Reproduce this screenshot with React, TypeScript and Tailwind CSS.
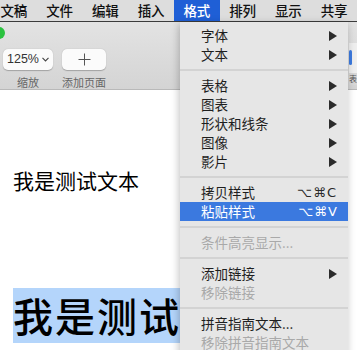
import React from "react";

type Item =
  | { kind: "sep" }
  | { kind: "item"; label: string; sub?: boolean; keys?: string; disabled?: boolean; active?: boolean };

const menuItems: Item[] = [
  { kind: "item", label: "字体", sub: true },
  { kind: "item", label: "文本", sub: true },
  { kind: "sep" },
  { kind: "item", label: "表格", sub: true },
  { kind: "item", label: "图表", sub: true },
  { kind: "item", label: "形状和线条", sub: true },
  { kind: "item", label: "图像", sub: true },
  { kind: "item", label: "影片", sub: true },
  { kind: "sep" },
  { kind: "item", label: "拷贝样式", keys: "⌥⌘C" },
  { kind: "item", label: "粘贴样式", keys: "⌥⌘V", active: true },
  { kind: "sep" },
  { kind: "item", label: "条件高亮显示...", disabled: true },
  { kind: "sep" },
  { kind: "item", label: "添加链接", sub: true },
  { kind: "item", label: "移除链接", disabled: true },
  { kind: "sep" },
  { kind: "item", label: "拼音指南文本..." },
  { kind: "item", label: "移除拼音指南文本", disabled: true },
];

const menuBar = ["文稿", "文件", "编辑", "插入", "格式", "排列", "显示", "共享"];

const Arrow = ({ light }: { light?: boolean }) => (
  <svg width="8" height="10" viewBox="0 0 8 10">
    <polygon points="0,0 8,5 0,10" fill={light ? "#ffffff" : "#2b2b2b"} />
  </svg>
);

export default function App() {
  return (
    <div className="relative w-[357px] h-[350px] overflow-hidden bg-white font-['Noto_Sans_CJK_SC',sans-serif]">
      {/* menu bar */}
      <div className="flex h-[22px] bg-[#dddddd] border-b border-[#3c3c3c] -ml-[9px]">
        {menuBar.map((m) => (
          <div
            key={m}
            className={
              m === "格式"
                ? "w-[47px] text-center text-[13.5px] leading-[21px] font-medium bg-[#1f5fd6] text-white"
                : "w-[47px] text-center text-[13.5px] leading-[21px] font-medium text-[#111]"
            }
          >
            {m}
          </div>
        ))}
      </div>

      {/* toolbar */}
      <div className="flex h-[68px] bg-gradient-to-b from-[#e3e3e3] to-[#d4d4d4] border-b border-[#b9b9b9]">
        <div className="flex-1 flex flex-col">
          <div className="h-[27px]">
            <div className="w-[12px] h-[12px] rounded-full bg-[#2bc23f] -ml-[7px] mt-[5px]" />
          </div>
          <div className="flex">
            <div className="ml-[3px] flex flex-col items-center">
              <div className="w-[50px] h-[21px] rounded-[5px] bg-[#fbfbfb] shadow-[0_0.5px_1px_rgba(0,0,0,0.25)] flex items-center justify-center gap-[3px] text-[12.5px] text-[#333] font-['Liberation_Sans',sans-serif]">
                125%
                <svg width="7" height="5" viewBox="0 0 7 5">
                  <polyline points="0.5,0.8 3.5,4 6.5,0.8" fill="none" stroke="#444" strokeWidth="1.1" />
                </svg>
              </div>
              <div className="mt-[5px] text-[11px] leading-[14px] text-[#666]">缩放</div>
            </div>
            <div className="ml-[9px] flex flex-col items-center">
              <div className="w-[44px] h-[21px] rounded-[5px] bg-[#fbfbfb] shadow-[0_0.5px_1px_rgba(0,0,0,0.25)] flex items-center justify-center">
                <svg width="13" height="13" viewBox="0 0 13 13">
                  <path d="M6.5 0.5V12.5M0.5 6.5H12.5" stroke="#555" strokeWidth="1" />
                </svg>
              </div>
              <div className="mt-[5px] text-[11px] leading-[14px] text-[#666]">添加页面</div>
            </div>
          </div>
        </div>
        <div className="w-[8px] flex flex-col">
          <div className="h-[21px]" />
          <div className="h-[30px] bg-[#efefef] pt-[7px]">
            <div className="w-[3px] h-[15px] bg-[#3d7be0] rounded-sm" />
          </div>
          <div className="h-[12px] bg-[#d8d8d8] text-[8px] leading-[12px] text-[#555] overflow-hidden">表</div>
        </div>
      </div>

      {/* document */}
      <div className="pl-[13px]">
        <div className="pt-[77px] text-[21px] leading-[26px] text-black">我是测试文本</div>
        <div className="mt-[95px] -ml-[13px] pl-[13px]">
          <div className="w-[320px] h-[55px] bg-[#b4d5fb] text-[40px] leading-[55px] tracking-[2px] text-black font-medium whitespace-nowrap">
            我是测试文本
          </div>
        </div>
      </div>

      {/* format menu */}
      <div className="absolute left-[180px] top-[22px] w-[168px] h-[340px] bg-[#e6e6e6] shadow-[-1px_2px_8px_rgba(0,0,0,0.25)] pt-[4px]">
        {menuItems.map((it, i) =>
          it.kind === "sep" ? (
            <div key={i} className="h-[12px] flex items-center">
              <div className="w-full h-[2px] bg-[#d3d3d3]" />
            </div>
          ) : (
            <div
              key={i}
              className={
                it.active
                  ? "h-[19px] flex items-center justify-between pl-[21px] pr-[10px] bg-[#3b79df] text-white"
                  : "h-[19px] flex items-center justify-between pl-[21px] pr-[11px]"
              }
            >
              <span
                className={
                  it.disabled
                    ? "text-[13.5px] leading-[19px] text-[#a9a9a9]"
                    : it.active
                    ? "text-[13.5px] leading-[19px] text-white"
                    : "text-[13.5px] leading-[19px] text-[#1e1e1e]"
                }
              >
                {it.label}
              </span>
              {it.sub && <Arrow light={it.active} />}
              {it.keys && (
                <span
                  className={
                    it.active
                      ? "text-[13px] leading-[19px] font-['DejaVu_Sans',sans-serif] tracking-[1px] text-white"
                      : "text-[13px] leading-[19px] font-['DejaVu_Sans',sans-serif] tracking-[1px] text-[#2a2a2a]"
                  }
                >
                  {it.keys}
                </span>
              )}
            </div>
          )
        )}
      </div>
    </div>
  );
}
